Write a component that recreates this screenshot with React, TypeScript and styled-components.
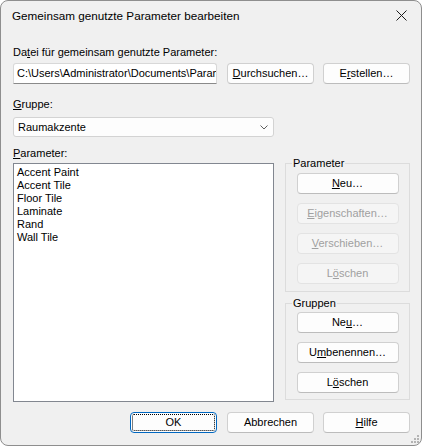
import styled, { createGlobalStyle } from "styled-components";

const GlobalStyle = createGlobalStyle`
  html, body {
    margin: 0;
    padding: 0;
    background: #ffffff;
  }
  body {
    font-family: "Liberation Sans", Arial, sans-serif;
    font-size: 11px;
    color: #000000;
  }
`;

const parameters = [
  "Accent Paint",
  "Accent Tile",
  "Floor Tile",
  "Laminate",
  "Rand",
  "Wall Tile",
];

function CloseIcon() {
  return (
    <svg width="11" height="11" viewBox="0 0 11 11">
      <path d="M0.5 0.5 L10.5 10.5 M10.5 0.5 L0.5 10.5" stroke="#1b1b1b" strokeWidth="1" fill="none" />
    </svg>
  );
}

function Chevron() {
  return (
    <svg width="8" height="5" viewBox="0 0 8 5">
      <path d="M0.5 0.5 L4 4 L7.5 0.5" stroke="#5f5f5f" strokeWidth="1" fill="none" />
    </svg>
  );
}

function Grip() {
  const dots = [
    [6, 0],
    [3, 3],
    [6, 3],
    [0, 6],
    [3, 6],
    [6, 6],
  ];
  return (
    <svg width="8" height="8" viewBox="0 0 8 8">
      {dots.map(([x, y]) => (
        <rect key={`${x}-${y}`} x={x} y={y} width="2" height="2" fill="#b4b4b4" />
      ))}
    </svg>
  );
}

export default function App() {
  return (
    <>
      <GlobalStyle />
      <Window>
        <TitleBar>
          <Title>Gemeinsam genutzte Parameter bearbeiten</Title>
          <CloseButton>
            <CloseIcon />
          </CloseButton>
        </TitleBar>

        <Body>
          <Label>
            Da<u>t</u>ei für gemeinsam genutzte Parameter:
          </Label>
          <PathRow>
            <PathBox>C:\Users\Administrator\Documents\Parameter.txt</PathBox>
            <Button>
              <u>D</u>urchsuchen…
            </Button>
            <Button>
              E<u>r</u>stellen…
            </Button>
          </PathRow>

          <Label $top={13}>
            <u>G</u>ruppe:
          </Label>
          <Select>
            <span>Raumakzente</span>
            <Chevron />
          </Select>

          <Label $top={9}>
            <u>P</u>arameter:
          </Label>
          <Main>
            <ListBox>
              {parameters.map((p) => (
                <ListItem key={p}>{p}</ListItem>
              ))}
            </ListBox>

            <SideColumn>
              <GroupBox $padTop={9} $padBottom={7}>
                <Caption>Parameter</Caption>
                <Button $wide>
                  <u>N</u>eu…
                </Button>
                <Button $wide disabled>
                  <u>E</u>igenschaften…
                </Button>
                <Button $wide disabled>
                  <u>V</u>erschieben…
                </Button>
                <Button $wide disabled>
                  L<u>ö</u>schen
                </Button>
              </GroupBox>

              <GroupBox $padTop={8} $padBottom={6}>
                <Caption>Gruppen</Caption>
                <Button $wide>
                  Ne<u>u</u>…
                </Button>
                <Button $wide>
                  U<u>m</u>benennen…
                </Button>
                <Button $wide>
                  L<u>ö</u>schen
                </Button>
              </GroupBox>
            </SideColumn>
          </Main>

          <Footer>
            <DefaultButton>OK</DefaultButton>
            <Button>Abbrechen</Button>
            <Button>
              <u>H</u>ilfe
            </Button>
          </Footer>
        </Body>

        <GripCorner>
          <Grip />
        </GripCorner>
      </Window>
    </>
  );
}

const Window = styled.div`
  position: relative;
  display: flex;
  flex-direction: column;
  box-sizing: border-box;
  width: 422px;
  height: 446px;
  border: 1px solid #8e8e8e;
  border-radius: 8px;
  background: #f0f0f0;
  overflow: hidden;
`;

const TitleBar = styled.div`
  display: flex;
  align-items: center;
  justify-content: space-between;
  height: 29px;
  padding: 0 9px 0 11px;
`;

const Title = styled.div`
  font-size: 11.7px;
  line-height: 15px;
`;

const CloseButton = styled.div`
  display: flex;
  align-items: center;
  justify-content: center;
  width: 22px;
  height: 22px;
`;

const Body = styled.div`
  display: flex;
  flex-direction: column;
  padding: 15px 11px 0 12px;
`;

const Label = styled.div<{ $top?: number }>`
  height: 15px;
  line-height: 15px;
  margin-top: ${(p) => p.$top ?? 0}px;
  white-space: nowrap;
`;

const PathRow = styled.div`
  display: flex;
  margin-top: 3px;

  & > :nth-child(2) {
    margin-left: 10px;
  }
  & > :nth-child(3) {
    margin-left: 9px;
  }
`;

const PathBox = styled.div`
  box-sizing: border-box;
  width: 204px;
  height: 21px;
  padding: 0 3px;
  line-height: 19px;
  background: #ffffff;
  border: 1px solid #d8d8d8;
  border-bottom-color: #8a8a8a;
  border-radius: 3px 3px 0 0;
  white-space: nowrap;
  overflow: hidden;
`;

const Button = styled.button<{ $wide?: boolean }>`
  box-sizing: border-box;
  width: ${(p) => (p.$wide ? 102 : 87)}px;
  height: 21px;
  padding: 0;
  font-family: inherit;
  font-size: 11px;
  line-height: 19px;
  color: #000000;
  background: #fdfdfd;
  border: 1px solid #d0d0d0;
  border-bottom-color: #bcbcbc;
  border-radius: 4px;

  &:disabled {
    color: #a0a0a0;
    background: #f5f5f5;
    border-color: #e3e3e3;
  }
`;

const DefaultButton = styled(Button)`
  border-color: #0067c0;
  outline: 1px dotted #000000;
  outline-offset: -3px;
`;

const Select = styled.div`
  display: flex;
  align-items: center;
  justify-content: space-between;
  box-sizing: border-box;
  width: 261px;
  height: 20px;
  margin-top: 5px;
  padding: 0 5px 0 4px;
  background: #fdfdfd;
  border: 1px solid #d3d3d3;
  border-radius: 3px;
`;

const Main = styled.div`
  display: grid;
  grid-template-columns: 261px 125px;
  column-gap: 11px;
  align-items: start;
  margin-top: 2px;
`;

const ListBox = styled.div`
  box-sizing: border-box;
  height: 239px;
  padding: 2px 2px;
  background: #ffffff;
  border: 1px solid #828790;
`;

const ListItem = styled.div`
  height: 13px;
  line-height: 13px;
  padding-left: 1px;
  white-space: nowrap;
`;

const SideColumn = styled.div`
  display: flex;
  flex-direction: column;
  gap: 11px;
`;

const GroupBox = styled.div<{ $padTop: number; $padBottom: number }>`
  position: relative;
  display: flex;
  flex-direction: column;
  align-items: center;
  gap: 9px;
  padding: ${(p) => p.$padTop}px 0 ${(p) => p.$padBottom}px;
  border: 1px solid #dcdcdc;
`;

const Caption = styled.span`
  position: absolute;
  top: -8px;
  left: 6px;
  padding: 0 1px;
  line-height: 15px;
  background: #f0f0f0;
`;

const Footer = styled.div`
  display: flex;
  justify-content: flex-end;
  margin-top: 10px;

  & > :nth-child(2) {
    margin-left: 10px;
  }
  & > :nth-child(3) {
    margin-left: 9px;
  }
`;

const GripCorner = styled.div`
  position: absolute;
  right: 2px;
  bottom: 2px;
  display: flex;
`;
